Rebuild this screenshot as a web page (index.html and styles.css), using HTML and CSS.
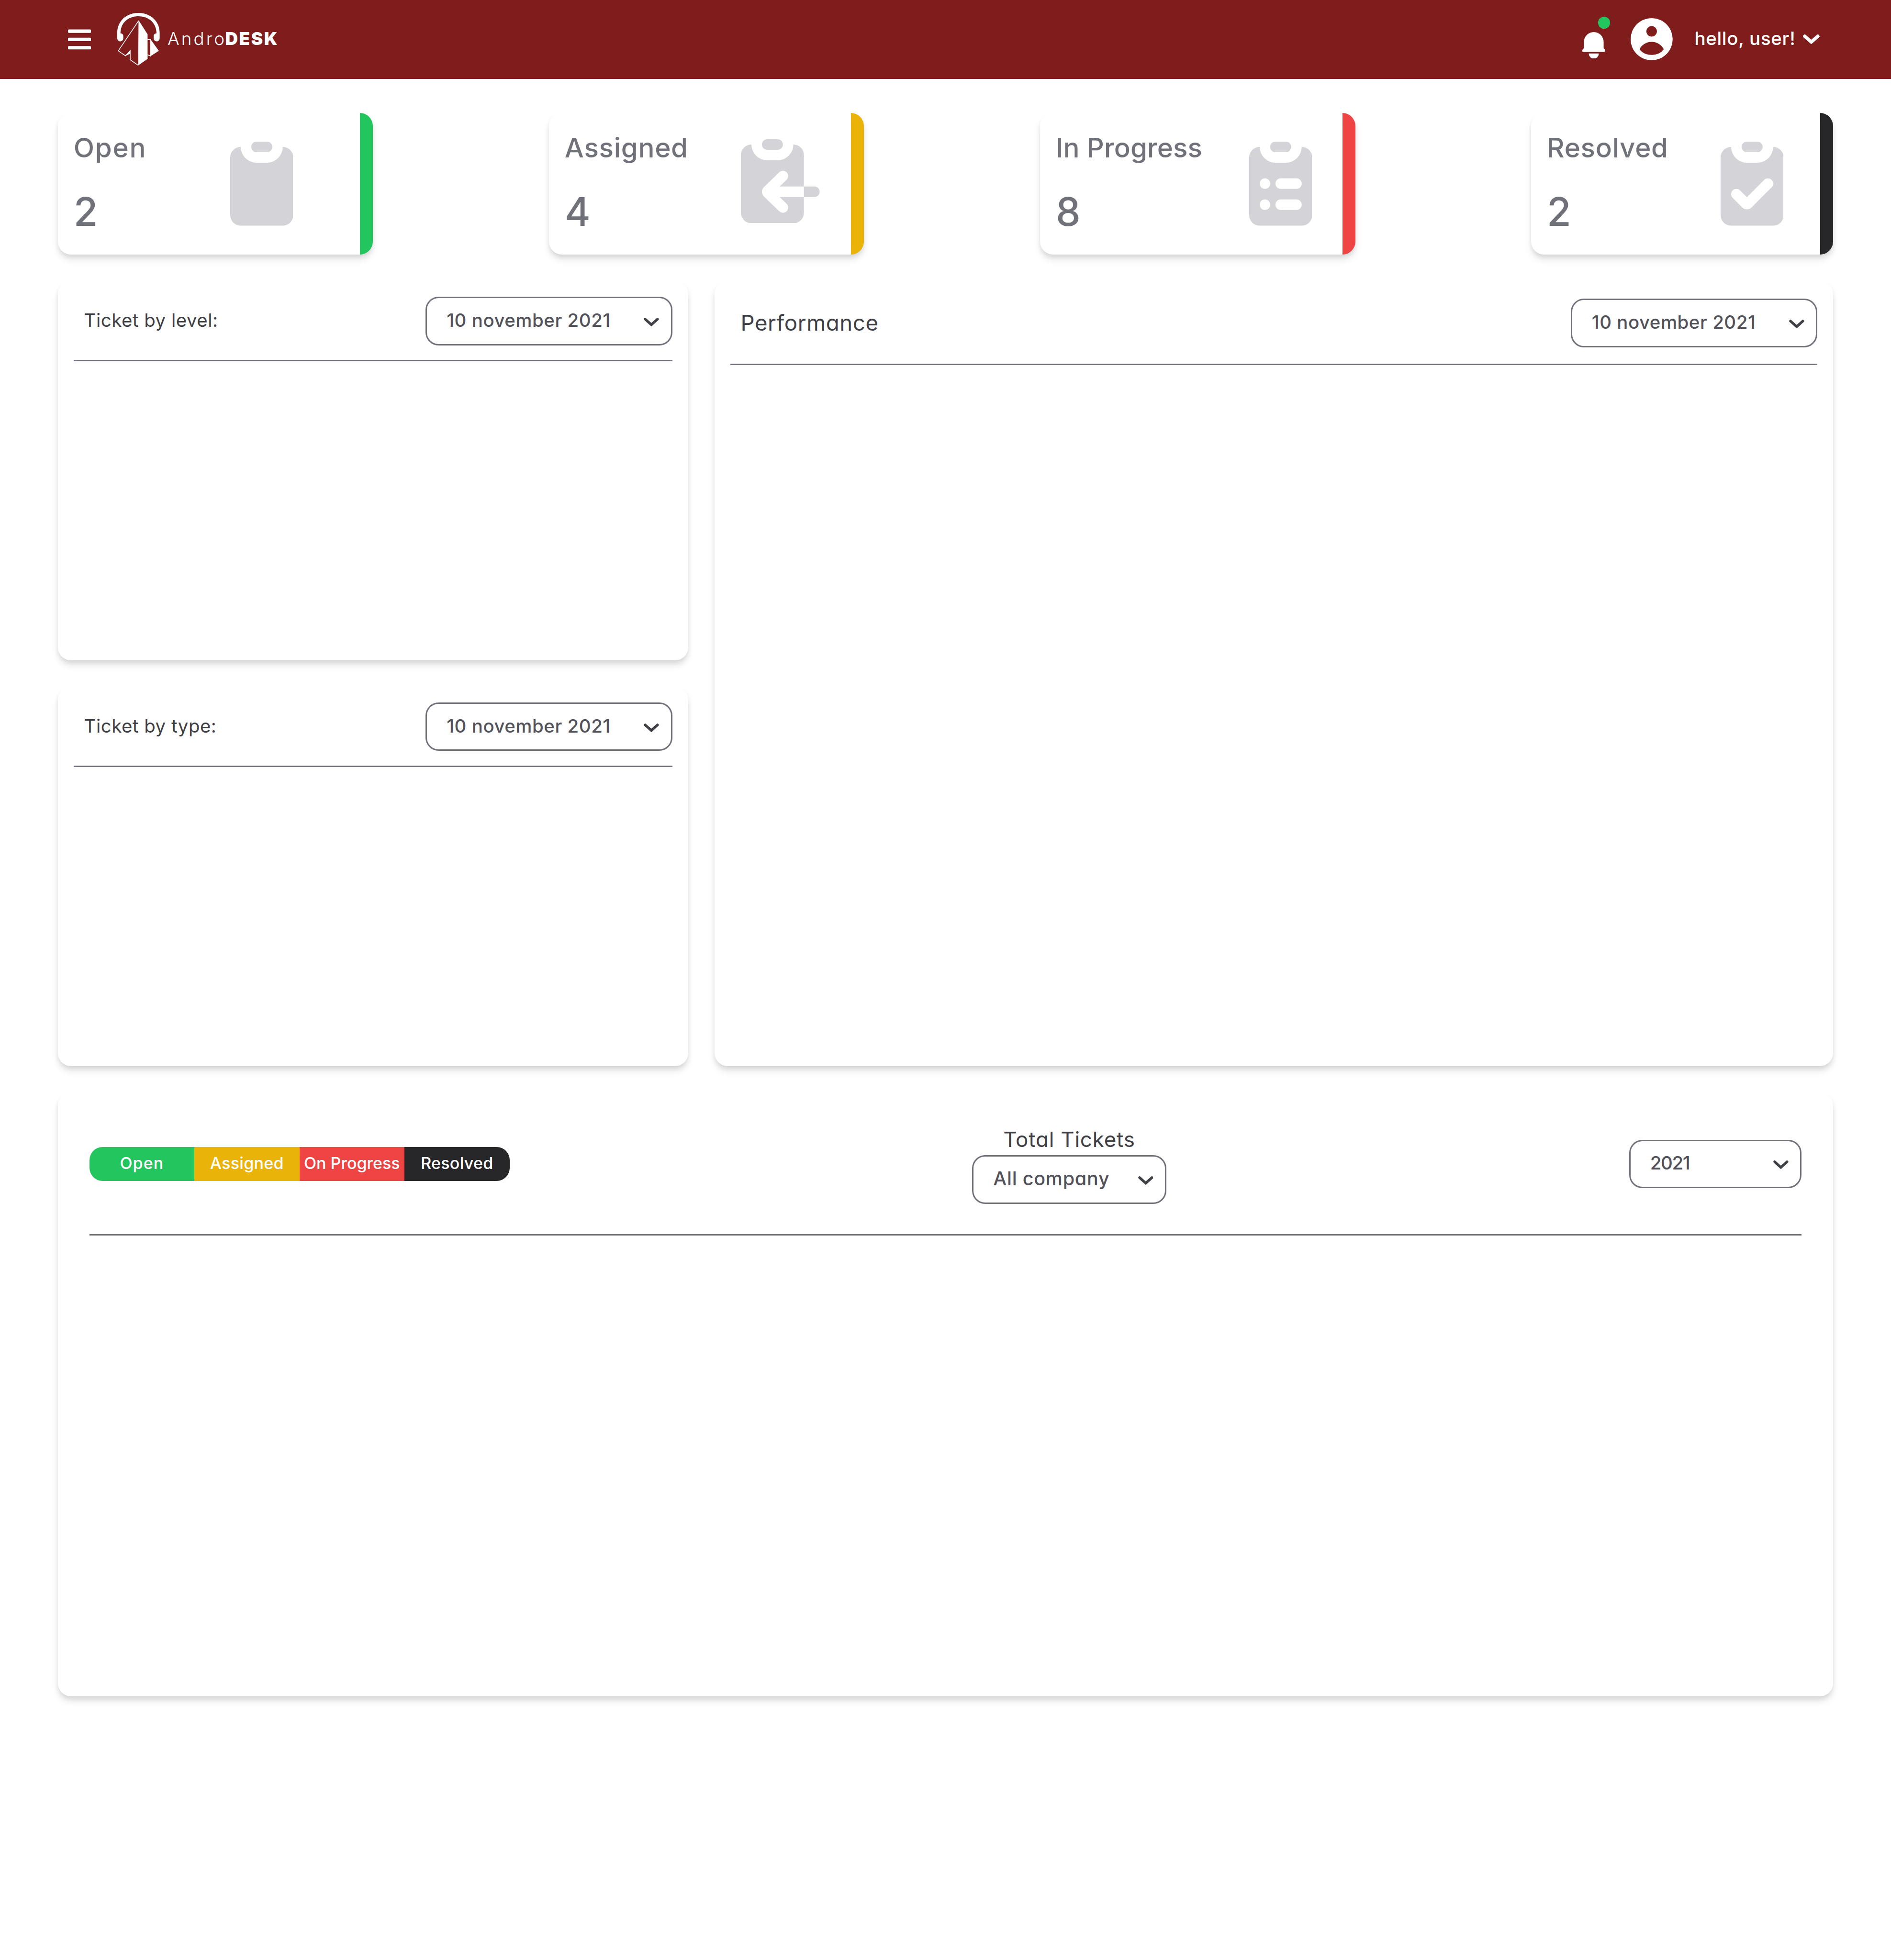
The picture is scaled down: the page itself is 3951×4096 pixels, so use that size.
FILE: index.html
```html
<!DOCTYPE html>
<html lang="en">
<head>
<meta charset="utf-8">
<title>AndroDESK</title>
<link rel="stylesheet" href="styles.css">
</head>
<body>
<header class="navbar">
  <div class="navbar-left">
    <svg class="menu-icon" viewBox="0 0 17.5 20" fill="#fff">
      <rect y="2.4" width="17.5" height="2.6" rx=".7"/>
      <rect y="8.7" width="17.5" height="2.6" rx=".7"/>
      <rect y="15" width="17.5" height="2.6" rx=".7"/>
    </svg>
    <svg class="logo-mark" viewBox="439 90 253 360" preserveAspectRatio="none" fill="#fff">
      <path d="M439 262V225C439 150 490 90 565 90S692 150 692 225V262C692 276 684 285 674 285S656 276 656 264V250C656 238 663 230 673 230C673 160 628 113 565 113S458 160 458 230C468 230 475 238 475 250V264C475 276 467 285 457 285S439 276 439 262Z"/>
      <path d="M568 143L620 237V405L564 450L566 143Z"/>
      <path class="logo-line" d="M567 143L445 350L488 384L516 348V411L564 449"/>
      <path d="M488 384L516 348V370Z"/>
      <path class="logo-line" d="M620 271H638V386L620 377"/>
      <path d="M638 271L687 350L638 386Z"/>
    </svg>
    <div class="logo-text"><span class="logo-light">Andro</span><span class="logo-bold">DESK</span></div>
  </div>
  <div class="navbar-right">
    <div class="bell">
      <svg class="bell-icon" viewBox="0 0 17.5 20.2" fill="#fff">
        <path d="M8.75 0A7.5 7.5 0 0 1 16.25 7.5V12.2L17.4 13.5Q17.9 15.1 16.8 15.1H.7Q-.4 15.1.1 13.5L1.25 12.2V7.5A7.5 7.5 0 0 1 8.75 0Z"/>
        <path d="M4.9 16.3H12.6A3.85 3.9 0 0 1 4.9 16.3Z"/>
      </svg>
      <span class="bell-dot"></span>
    </div>
    <svg class="avatar" viewBox="0 0 32 32">
      <path fill="#fff" fill-rule="evenodd" d="M16 0a16 16 0 1 0 0 32a16 16 0 1 0 0-32ZM16 6a4 4 0 1 1 0 8a4 4 0 1 1 0-8ZM16 18C20 18 23.6 20.2 25.2 23.6C23.4 26.4 19.8 28 16 28S8.6 26.4 6.8 23.6C8.4 20.2 12 18 16 18Z"/>
    </svg>
    <span class="greeting">hello, user!</span>
    <svg class="greeting-chevron" viewBox="0 0 12.7 7.4"><path d="M1.4 1.4L6.35 5.7L11.3 1.4"/></svg>
  </div>
</header>

<main class="page">
  <section class="stats">
    <article class="stat stat-open">
      <div><h2 class="stat-title title-open">Open</h2><p class="stat-value">2</p></div>
      <svg class="stat-icon" viewBox="0 0 12 16">
        <rect x="4" width="4" height="2" rx="1"/>
        <path d="M0 3A2 2 0 0 1 2 1A3 3 0 0 0 5 4H7A3 3 0 0 0 10 1A2 2 0 0 1 12 3V14A2 2 0 0 1 10 16H2A2 2 0 0 1 0 14Z"/>
      </svg>
    </article>
    <article class="stat stat-assigned">
      <div><h2 class="stat-title">Assigned</h2><p class="stat-value">4</p></div>
      <svg class="stat-icon stat-icon-wide" viewBox="0 0 15 16">
        <rect x="4" width="4" height="2" rx="1"/>
        <path d="M0 3A2 2 0 0 1 2 1A3 3 0 0 0 5 4H7A3 3 0 0 0 10 1A2 2 0 0 1 12 3V14A2 2 0 0 1 10 16H2A2 2 0 0 1 0 14Z"/>
        <path d="M12 9H14A1 1 0 0 1 14 11H12Z"/>
        <path class="cutout" d="M8 7L5.1 9.8Q4.9 10 5.1 10.2L8 13"/>
        <rect class="cutout-fill" x="6" y="9" width="6" height="2"/>
      </svg>
    </article>
    <article class="stat stat-progress">
      <div><h2 class="stat-title title-progress">In Progress</h2><p class="stat-value">8</p></div>
      <svg class="stat-icon" viewBox="0 0 12 16">
        <rect x="4" width="4" height="2" rx="1"/>
        <path d="M0 3A2 2 0 0 1 2 1A3 3 0 0 0 5 4H7A3 3 0 0 0 10 1A2 2 0 0 1 12 3V14A2 2 0 0 1 10 16H2A2 2 0 0 1 0 14Z"/>
        <g class="cutout-fill">
          <circle cx="3" cy="8" r="1"/><rect x="5" y="7" width="5" height="2" rx="1"/>
          <circle cx="3" cy="12" r="1"/><rect x="5" y="11" width="5" height="2" rx="1"/>
        </g>
      </svg>
    </article>
    <article class="stat stat-resolved">
      <div><h2 class="stat-title">Resolved</h2><p class="stat-value">2</p></div>
      <svg class="stat-icon" viewBox="0 0 12 16">
        <rect x="4" width="4" height="2" rx="1"/>
        <path d="M0 3A2 2 0 0 1 2 1A3 3 0 0 0 5 4H7A3 3 0 0 0 10 1A2 2 0 0 1 12 3V14A2 2 0 0 1 10 16H2A2 2 0 0 1 0 14Z"/>
        <path class="cutout" d="M3 10L4.8 11.8Q5 12 5.2 11.8L9 8"/>
      </svg>
    </article>
  </section>

  <section class="charts">
    <article class="panel">
      <div class="panel-head">
        <h3 class="panel-title">Ticket by level:</h3>
        <div class="select"><span class="date">10 november 2021</span><svg class="chevron" viewBox="0 0 11.6 6.8"><path d="M1.1 1.1L5.8 5.3L10.5 1.1"/></svg></div>
      </div>
    </article>
    <article class="panel">
      <div class="panel-head">
        <h3 class="panel-title">Ticket by type:</h3>
        <div class="select"><span class="date">10 november 2021</span><svg class="chevron" viewBox="0 0 11.6 6.8"><path d="M1.1 1.1L5.8 5.3L10.5 1.1"/></svg></div>
      </div>
    </article>
    <article class="panel panel-tall">
      <div class="panel-head">
        <h3 class="panel-title panel-title-large">Performance</h3>
        <div class="select"><span class="date">10 november 2021</span><svg class="chevron" viewBox="0 0 11.6 6.8"><path d="M1.1 1.1L5.8 5.3L10.5 1.1"/></svg></div>
      </div>
    </article>
  </section>

  <section class="totals">
    <div class="totals-head">
      <ul class="legend">
        <li class="legend-open">Open</li>
        <li class="legend-assigned">Assigned</li>
        <li class="legend-progress">On Progress</li>
        <li class="legend-resolved">Resolved</li>
      </ul>
      <div class="company">
        <h3 class="totals-title">Total Tickets</h3>
        <div class="select select-company"><span class="company-name">All company</span><svg class="chevron" viewBox="0 0 11.6 6.8"><path d="M1.1 1.1L5.8 5.3L10.5 1.1"/></svg></div>
      </div>
      <div class="select select-year"><span class="year">2021</span><svg class="chevron" viewBox="0 0 11.6 6.8"><path d="M1.1 1.1L5.8 5.3L10.5 1.1"/></svg></div>
    </div>
  </section>
</main>
</body>
</html>
```
FILE: styles.css
```css
/* 1rem is a tenth-scale unit: 14px of the 1440px design is written 1.4rem */
html { font-size: 27.4375px; }
* { box-sizing: border-box; margin: 0; padding: 0; }
body {
  background: #fff;
  color: #3f3f46;
  font-family: Inter, "Open Sans", sans-serif;
  font-feature-settings: "cv11";
  min-height: 100vh;
}
svg { display: block; flex: none; }

.navbar {
  height: 6rem;
  padding: 0 5.42rem 0 5.18rem;
  background: #7f1d1d;
  color: #fff;
  display: flex;
  justify-content: space-between;
  align-items: center;
}
.navbar-left, .navbar-right { display: flex; align-items: center; }
.menu-icon { width: 1.75rem; height: 2rem; margin-right: 2rem; }
.logo-mark { width: 3.23rem; height: 4rem; }
.logo-line { fill: none; stroke: #fff; stroke-width: 1.6px; vector-effect: non-scaling-stroke; }
.logo-text {
  margin: -.1rem 0 0 .6rem;
  font-size: 1.34rem;
  line-height: 2rem;
  white-space: nowrap;
}
.logo-light { font-weight: 300; letter-spacing: .11em; }
.logo-bold { font-weight: 900; letter-spacing: .07em; margin-left: -.1rem; }

.bell { position: relative; margin: .9rem 1.96rem 0 0; }
.bell-icon { width: 1.75rem; height: 2.02rem; }
.bell-dot {
  position: absolute;
  top: -1.15rem;
  right: -.37rem;
  width: .9rem;
  height: .9rem;
  border-radius: 50%;
  background: #22c55e;
}
.avatar { width: 3.2rem; height: 3.2rem; margin-right: 1.65rem; }
.greeting { font-size: 1.4rem; font-weight: 500; line-height: 2rem; letter-spacing: .0186em; margin: -.12rem .58rem 0 0; }
.greeting-chevron { width: 1.27rem; height: .74rem; }
.greeting-chevron path { fill: none; stroke: #fff; stroke-width: 2.6; stroke-linecap: round; }

.page { padding: 2.6rem 4.4rem 0; }

.stats { display: flex; justify-content: space-between; }
.stat {
  width: 24rem;
  height: 10.8rem;
  padding: 1.27rem 0 0 1.2rem;
  display: flex;
  justify-content: space-between;
  background: #fff;
  border-right: 1rem solid;
  border-radius: 1rem;
  box-shadow: 0 .4rem .6rem -.1rem rgb(0 0 0 / .12), 0 .2rem .4rem -.1rem rgb(0 0 0 / .09);
}
.stat-open { border-color: #22c55e; padding-right: 5.1rem; }
.stat-assigned { border-color: #eab308; padding-right: 2.4rem; }
.stat-progress { border-color: #ef4444; padding-right: 2.3rem; }
.stat-resolved { border-color: #27272a; padding-right: 2.8rem; width: 23rem; }
.stat-title { color: #71717a; font-size: 2.06rem; font-weight: 500; line-height: 2.8rem; letter-spacing: .013em; }
.title-open { letter-spacing: .032em; }
.title-progress { letter-spacing: .001em; }
.stat-value { color: #71717a; font-size: 3rem; font-weight: 500; line-height: 3.6rem; margin-top: 1.66rem; }
.stat-icon { width: 4.8rem; height: 6.4rem; margin-top: .93rem; fill: #d4d4d8; }
.stat-icon-wide { width: 6rem; margin-top: .73rem; }
.cutout { fill: none; stroke: #fff; stroke-width: 2; stroke-linecap: round; stroke-linejoin: round; }
.cutout-fill { fill: #fff; }

.charts {
  margin-top: 2rem;
  display: grid;
  grid-template-columns: 48rem 85.2rem;
  grid-template-rows: 28.9rem 28.9rem;
  grid-auto-flow: column;
  gap: 2rem;
}
.panel, .totals {
  background: #fff;
  border-radius: 1rem;
  box-shadow: 0 .4rem .6rem -.1rem rgb(0 0 0 / .12), 0 .2rem .4rem -.1rem rgb(0 0 0 / .09);
}
.panel { padding: 1.2rem; }
.panel-tall { grid-row: 1 / span 2; grid-column: 2; }
.panel-head {
  display: flex;
  justify-content: space-between;
  align-items: center;
  padding: 0 0 1.1rem .8rem;
  border-bottom: 3px solid #71717a;
}
.panel-title { font-size: 1.4rem; font-weight: 400; line-height: 2rem; letter-spacing: .0136em; margin-top: -.1rem; }
.panel-title-large { font-size: 1.66rem; line-height: 4rem; letter-spacing: .014em; margin-top: 0; }

.select {
  width: 18.8rem;
  height: 3.7rem;
  padding: 0 .9rem 0 1.5rem;
  border: 3px solid #71717a;
  border-radius: 1rem;
  display: flex;
  justify-content: space-between;
  align-items: center;
  color: #52525b;
  font-size: 1.4rem;
  font-weight: 500;
  line-height: 2rem;
}
.select span { margin-top: -.1rem; white-space: nowrap; }
.date { letter-spacing: .0141em; }
.company-name { font-size: 1.44rem; letter-spacing: .019em; }
.year { letter-spacing: -.0355em; }
.chevron { width: 1.16rem; height: .68rem; margin-top: .17rem; }
.chevron path { fill: none; stroke: #3f3f46; stroke-width: 2; stroke-linecap: round; }

.totals { margin-top: 2rem; height: 46rem; padding: 2.4rem; }
.totals-head {
  display: flex;
  justify-content: space-between;
  align-items: center;
  padding-bottom: 2.3rem;
  border-bottom: 3px solid #71717a;
}
.legend {
  width: 32rem;
  height: 2.6rem;
  display: grid;
  grid-template-columns: repeat(4, 1fr);
  overflow: hidden;
  border-radius: 1rem;
  list-style: none;
  color: #fff;
  font-size: 1.24rem;
  font-weight: 500;
  line-height: 2.5rem;
  letter-spacing: .008em;
  text-align: center;
  white-space: nowrap;
}
.legend-open { background: #22c55e; letter-spacing: .03em; }
.legend-assigned { background: #eab308; }
.legend-progress { background: #ef4444; letter-spacing: 0; }
.legend-resolved { background: #27272a; }
.totals-title { font-size: 1.6rem; font-weight: 400; line-height: 2.4rem; letter-spacing: .0187em; text-align: center; }
.select-company { width: 14.8rem; }
.select-year { width: 13.15rem; }
```
